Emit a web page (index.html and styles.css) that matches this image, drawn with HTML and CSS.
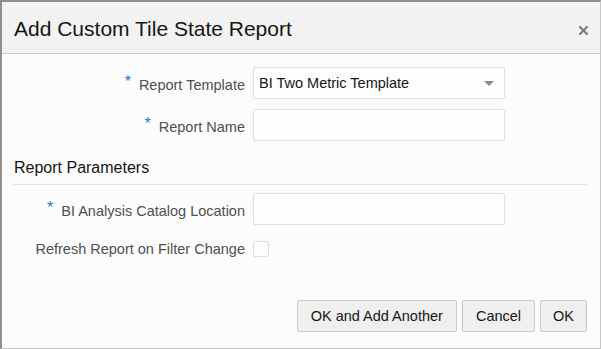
FILE: index.html
```html
<!DOCTYPE html>
<html>
<head>
<meta charset="utf-8">
<link rel="stylesheet" href="styles.css">
</head>
<body>
<div class="dialog">
  <div class="header">
    <h1 class="title">Add Custom Tile State Report</h1>
    <span class="close">
      <svg width="9" height="9" viewBox="0 0 9 9"><path d="M1 1 L8 8 M8 1 L1 8" stroke="#7a7a7a" stroke-width="2" stroke-linecap="square"/></svg>
    </span>
  </div>
  <div class="body">
    <div class="form form-top">
      <label class="label"><span class="req">*</span>Report Template</label>
      <div class="select"><span>BI Two Metric Template</span><span class="arrow"></span></div>
      <label class="label"><span class="req">*</span>Report Name</label>
      <div class="input"></div>
    </div>
    <h2 class="section">Report Parameters</h2>
    <div class="form form-params">
      <label class="label"><span class="req">*</span>BI Analysis Catalog Location</label>
      <div class="input"></div>
      <label class="label">Refresh Report on Filter Change</label>
      <div class="checkbox"></div>
    </div>
    <div class="footer">
      <button class="btn">OK and Add Another</button>
      <button class="btn">Cancel</button>
      <button class="btn btn-ok">OK</button>
    </div>
  </div>
</div>
</body>
</html>
```
FILE: styles.css
```css
html, body {
  margin: 0;
  padding: 0;
  background: #fcfcfc;
}
.dialog {
  width: 601px;
  height: 349px;
  box-sizing: border-box;
  border-top: 2px solid #8f8f8f;
  border-left: 2px solid #8f8f8f;
  border-right: 1px solid #c8c8c8;
  border-bottom: 1px solid #c8c8c8;
  background: #fcfcfc;
  display: flex;
  flex-direction: column;
  font-family: "Liberation Sans", Arial, sans-serif;
}
.header {
  height: 51px;
  background: #f2f2f2;
  border-bottom: 1px solid #c9c9c9;
  display: flex;
  align-items: center;
  justify-content: space-between;
  padding: 0 12px 0 12px;
}
.title {
  margin: 0;
  font-size: 21px;
  font-weight: normal;
  color: #161513;
  padding-top: 2px;
}
.close {
  display: flex;
  margin-top: 5px;
}
.body {
  flex: 1;
  display: flex;
  flex-direction: column;
  padding: 0 13px 16px 11px;
}
.form {
  display: grid;
  grid-template-columns: 232px 252px;
  column-gap: 8px;
  align-items: center;
}
.form-top {
  margin-top: 13px;
  grid-auto-rows: 32px;
  row-gap: 10px;
}
.form-params {
  margin-top: 8px;
  row-gap: 16px;
}
.label {
  text-align: right;
  font-size: 14.5px;
  color: #4f4f4f;
  white-space: nowrap;
}
.req {
  color: #2a76c4;
  font-size: 16px;
  margin-right: 8px;
  vertical-align: 3px;
}
.select, .input {
  height: 32px;
  box-sizing: border-box;
  border: 1px solid #dedede;
  border-radius: 2px;
  background: #fdfdfd;
}
.select {
  display: flex;
  align-items: center;
  justify-content: space-between;
  padding: 0 10px 0 5px;
  font-size: 14.5px;
  color: #161513;
}
.arrow {
  width: 0;
  height: 0;
  border-left: 5px solid transparent;
  border-right: 5px solid transparent;
  border-top: 5px solid #8a8a8a;
}
.checkbox {
  width: 16px;
  height: 16px;
  box-sizing: border-box;
  border: 1px solid #dedede;
  border-radius: 2px;
  background: #fdfdfd;
}
.section {
  margin: 17px 0 0 0;
  font-size: 16px;
  font-weight: normal;
  line-height: 20px;
  color: #161513;
  padding: 0 0 6px 1px;
  border-bottom: 1px solid #e3e3e3;
}
.footer {
  margin-top: auto;
  display: flex;
  justify-content: flex-end;
  gap: 5px;
}
.btn {
  height: 32px;
  box-sizing: border-box;
  padding: 0 13px;
  border: 1px solid #c9c9c9;
  border-radius: 2px;
  background: #efefef;
  font-family: "Liberation Sans", Arial, sans-serif;
  font-size: 14.5px;
  color: #161513;
}
.btn-ok {
  padding: 0 12px;
}
```
